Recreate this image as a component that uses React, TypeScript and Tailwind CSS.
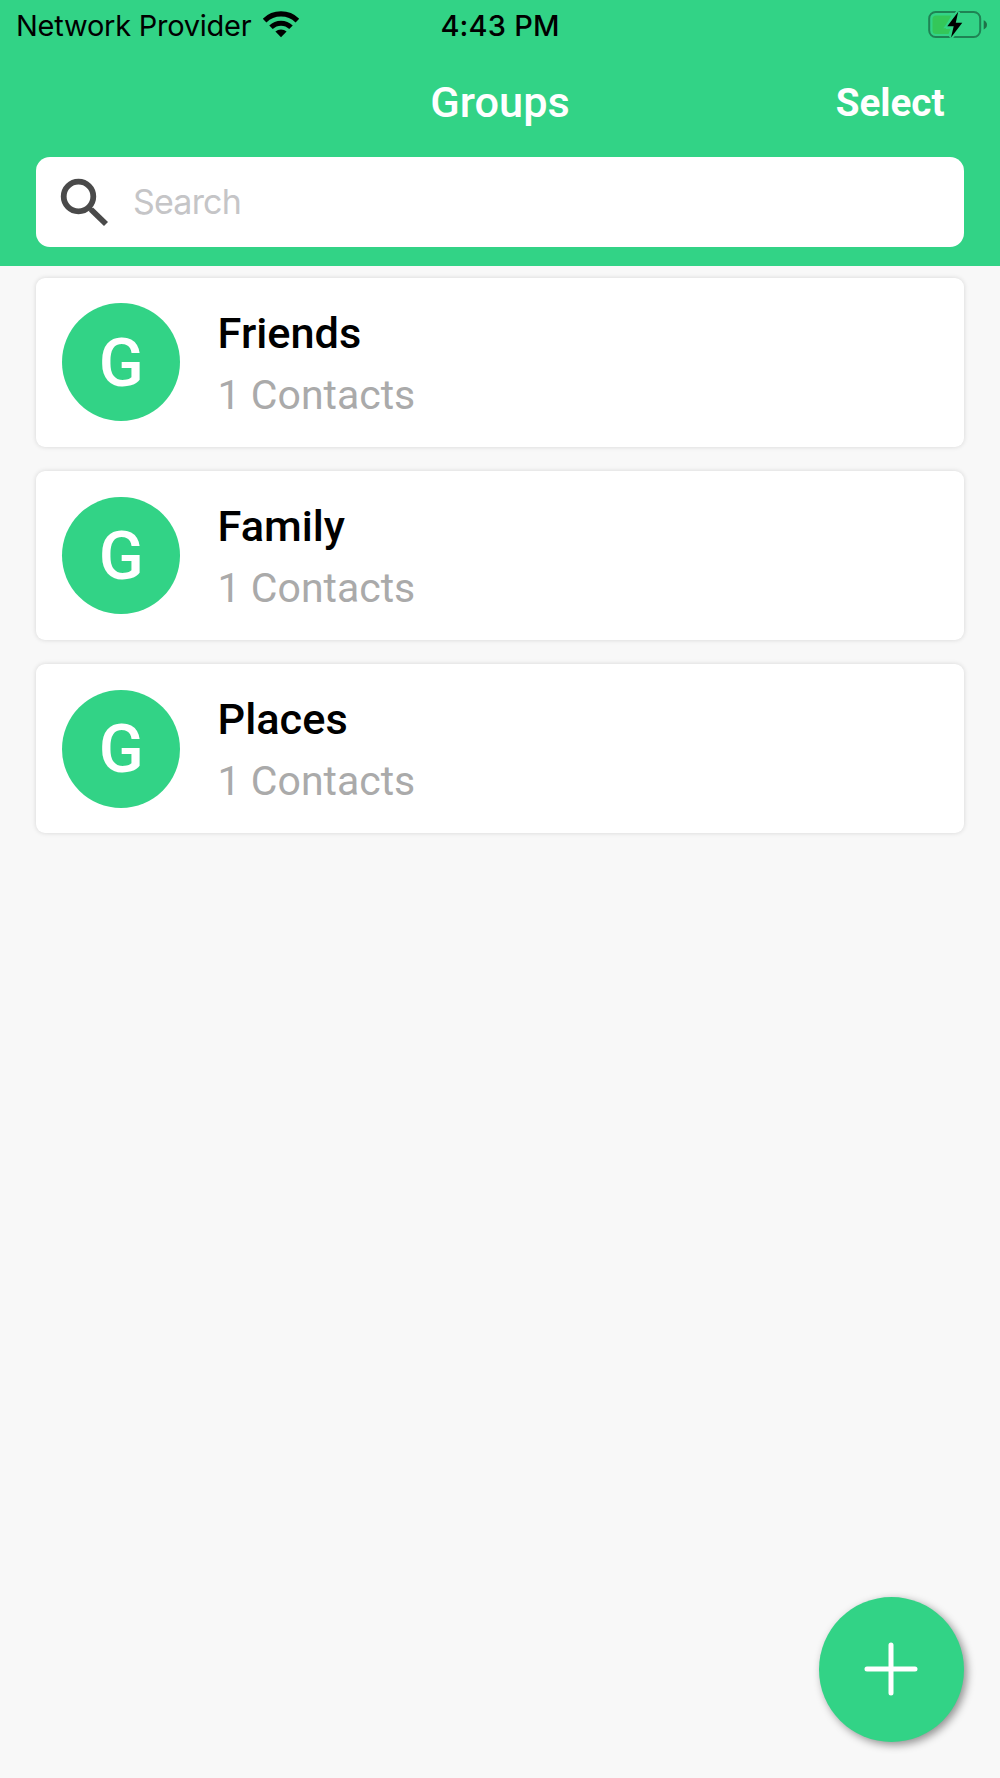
const GROUPS = [
  { name: "Friends", contacts: 1 },
  { name: "Family", contacts: 1 },
  { name: "Places", contacts: 1 },
];

function WifiIcon() {
  return (
    <svg width="38" height="28" viewBox="0 0 38 28" className="mb-[3px] ml-[11px]" fill="none" stroke="#000">
      <path d="M2.6 10.6a23.6 23.6 0 0 1 32.8 0" strokeWidth="5.2" />
      <path d="M9 17.2a14.4 14.4 0 0 1 20 0" strokeWidth="5" />
      <path d="M13.4 21.6a8.2 8.2 0 0 1 11.2 0L19 27.3z" fill="#000" stroke="none" />
    </svg>
  );
}

function BatteryIcon() {
  return (
    <svg width="60" height="30" viewBox="0 0 60 30" fill="none">
      <rect x="1.2" y="2" width="51" height="25" rx="6.5" stroke="#1f8354" strokeWidth="2" />
      <path d="M8 5.5H23.5L18 15v4h4.5L20.5 24H8a3.5 3.5 0 0 1-3.5-3.5V9A3.5 3.5 0 0 1 8 5.5z" fill="#34c759" />
      <path d="M55.7 10.2c2.2 1 3.3 2.7 3.3 4.6s-1.1 3.6-3.3 4.6z" fill="#1f7148" />
      <path
        d="M30.2 1.8L19.3 16.2h6.4L23 27.5 34.3 12.8h-6.5z"
        fill="#000"
        stroke="#32d386"
        strokeWidth="4"
        paintOrder="stroke"
      />
    </svg>
  );
}

function SearchIcon() {
  return (
    <svg width="50" height="50" viewBox="0 0 50 50" fill="none" stroke="#4a4a4a">
      <circle cx="20.5" cy="19.5" r="14.8" strokeWidth="5.8" />
      <path d="M32 31.5L33.5 33" strokeWidth="4" />
      <path d="M33 32.5L48 47" strokeWidth="5.8" />
    </svg>
  );
}

function Header() {
  return (
    <header className="h-[265.6px] bg-[#32d386]">
      <div className="grid h-[50px] grid-cols-[1fr_auto_1fr] items-center pt-[1px] font-['Inter'] text-[29px] text-black">
        <div className="flex items-center pl-4">
          <span className="tracking-[-0.25px]">Network Provider</span>
          <WifiIcon />
        </div>
        <span className="font-medium tracking-[0.2px]">4:43 PM</span>
        <div className="flex justify-end pr-3 pb-[2px]">
          <BatteryIcon />
        </div>
      </div>

      <div className="grid h-[107px] grid-cols-3 items-center text-white">
        <h1 className="col-start-2 text-center text-[43.3px] font-medium">Groups</h1>
        <button className="justify-self-end pr-[55.5px] pb-[2px] text-[38.6px] font-bold">Select</button>
      </div>

      <div className="mx-9 flex h-[89.5px] items-center rounded-[14px] bg-white pl-[22px]">
        <SearchIcon />
        <span className="ml-[25px] font-['Inter'] text-[34px] tracking-[-0.8px] text-[#c5c5c7]">Search</span>
      </div>
    </header>
  );
}

function GroupCard({ name, contacts }: { name: string; contacts: number }) {
  return (
    <li className="flex h-[169px] items-center rounded-[9px] bg-white pl-[26px] shadow-[0_0_5px_rgba(0,0,0,0.14)]">
      <div className="flex size-[117.6px] items-center justify-center rounded-full bg-[#32d386] pt-[2px] pl-[1px] text-[66px] font-medium text-white">
        G
      </div>
      <div className="ml-[38px] pt-[4px]">
        <h2 className="text-[43.3px] leading-[62px] font-medium text-black">{name}</h2>
        <p className="text-[41px] leading-[61px] text-[#aaaaaa]">{contacts} Contacts</p>
      </div>
    </li>
  );
}

export default function App() {
  return (
    <div className="flex h-[1778px] w-[1000px] flex-col overflow-hidden bg-[#f8f8f8] font-['Roboto',sans-serif]">
      <Header />
      <main className="flex flex-1 flex-col justify-between px-9 pt-[12.2px] pb-[36.5px]">
        <ul className="flex flex-col gap-[24.3px]">
          {GROUPS.map((group) => (
            <GroupCard key={group.name} {...group} />
          ))}
        </ul>
        <button
          aria-label="Add group"
          className="flex size-[145px] items-center justify-center self-end rounded-full bg-[#32d386] pr-[1px] shadow-[3px_3px_9px_rgba(0,0,0,0.42)]"
        >
          <svg width="54" height="54" viewBox="0 0 54 54" stroke="#fff" strokeWidth="5" strokeLinecap="round">
            <path d="M27 3v48M3 27h48" />
          </svg>
        </button>
      </main>
    </div>
  );
}
